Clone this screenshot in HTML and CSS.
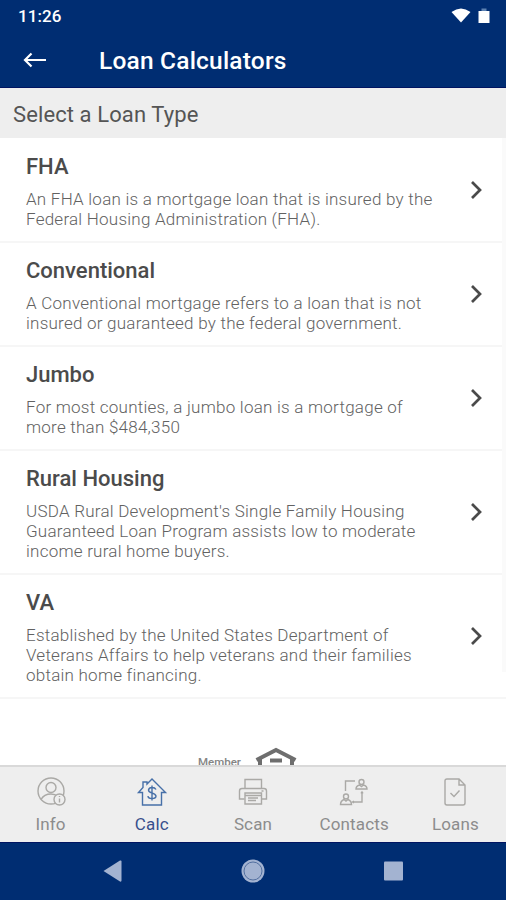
FILE: index.html
```html
<!DOCTYPE html>
<html lang="en">
<head>
<meta charset="utf-8">
<title>Loan Calculators</title>
<link rel="stylesheet" href="styles.css">
</head>
<body>
<div class="app">
  <header class="header">
    <div class="status">
      <span class="clock">11:26</span>
      <svg class="status-icons" width="40" height="20" viewBox="0 0 40 20"><path d="M1.500 5Q11 -2 20.500 5L11 15.500Z"/><path d="M28.500 4h11v12h-11z"/><path class="cap" d="M31.500 1.500h5V4h-5z"/></svg>
    </div>
    <div class="titlebar">
      <svg class="back" width="24" height="18" viewBox="0 0 24 18"><path d="M23 9H2M8.500 2.500L2 9l6.500 6.500"/></svg>
      <h1>Loan Calculators</h1>
    </div>
  </header>
  <h2 class="section"><span>Select a Loan Type</span></h2>
  <main class="content">
    <ul class="list">
      <li class="row"><div class="copy"><h3>FHA</h3><p>An FHA loan is a mortgage loan that is insured by the<br>Federal Housing Administration (FHA).</p></div><svg class="chevron" viewBox="0 0 12 20"><path d="M2 2l8 8-8 8"/></svg></li>
      <li class="row"><div class="copy"><h3>Conventional</h3><p>A Conventional mortgage refers to a loan that is not<br>insured or guaranteed by the federal government.</p></div><svg class="chevron" viewBox="0 0 12 20"><path d="M2 2l8 8-8 8"/></svg></li>
      <li class="row"><div class="copy"><h3>Jumbo</h3><p>For most counties, a jumbo loan is a mortgage of<br>more than $484,350</p></div><svg class="chevron" viewBox="0 0 12 20"><path d="M2 2l8 8-8 8"/></svg></li>
      <li class="row tall"><div class="copy"><h3>Rural Housing</h3><p>USDA Rural Development's Single Family Housing<br>Guaranteed Loan Program assists low to moderate<br>income rural home buyers.</p></div><svg class="chevron" viewBox="0 0 12 20"><path d="M2 2l8 8-8 8"/></svg></li>
      <li class="row tall"><div class="copy"><h3>VA</h3><p>Established by the United States Department of<br>Veterans Affairs to help veterans and their families<br>obtain home financing.</p></div><svg class="chevron" viewBox="0 0 12 20"><path d="M2 2l8 8-8 8"/></svg></li>
    </ul>
    <div class="legal">
      <span class="member">Member</span>
      <svg width="42" height="34" viewBox="0 0 42 34"><path d="M1.500 15L21 5l19.500 10M5 21v-7M37 21v-7"/><path d="M15 15.500h12"/></svg>
    </div>
    <div class="scrollbar"></div>
  </main>
  <nav class="tabs">
    <a class="tab"><svg viewBox="0 0 32 32"><circle cx="16" cy="15" r="13"/><circle cx="16" cy="11.500" r="5"/><path d="M6 23.500Q9 18 16 18q4 0 7 2.500"/><circle class="cover" cx="24.500" cy="23.500" r="5.500"/><path d="M24.500 22.500v4M24.500 20v1"/></svg><span>Info</span></a>
    <a class="tab active"><svg viewBox="0 0 32 32"><path d="M6.500 16.500H2.500L7 11.500V6h4v2L16 3l13.500 13.500h-4V29h-19z"/><path d="M20 13.500q-1-2-4-2t-3.500 2.500q0 2 3.500 3t4 3q0 2.500-4 2.500t-4-2.500M16 9.500v15"/></svg><span>Calc</span></a>
    <a class="tab"><svg viewBox="0 0 32 32"><path d="M8 12.500V3.500h16.500v9M7.500 23H2.500v-8q0-2.500 2.500-2.500h22q2.500 0 2.500 2.500v8h-5"/><path d="M8 17h16.500v11H8zM8 19.500h16M11 22h10M11 24.500h8M24.500 15h2"/></svg><span>Scan</span></a>
    <a class="tab"><svg viewBox="0 0 32 32"><path d="M7.500 15V5H17M24 16.500V26H15M16 25l-1.500 1 1.500 1M23 17.500l1-1.500 1 1.500"/><circle cx="23.500" cy="6" r="2.500"/><path d="M18 13q0-3 3.500-4l2 1.500 2-1.500q3.500 1 3.500 4z"/><circle cx="8" cy="20.500" r="2.500"/><path d="M2.500 28.500q0-3.500 3.500-5l2 1.500 2-1.500q3.500 1.500 3.500 5z"/></svg><span>Contacts</span></a>
    <a class="tab"><svg viewBox="0 0 32 32"><path d="M8 3h12l6 6V27q0 2-2 2H8Q6 29 6 27V5q0-2 2-2zM20 3v6h6M11.500 17l3.500 3.500 5.500-6"/></svg><span>Loans</span></a>
  </nav>
  <footer class="system">
    <svg width="506" height="58" viewBox="0 0 506 58"><path d="M103.500 28L120 17.500q1.500-.5 1.500 1v19q0 1.500-1.500 1z"/><circle cx="253" cy="28" r="11.500"/><circle class="ring" cx="253" cy="28" r="9"/><rect x="384" y="18.500" width="19" height="19" rx="1"/></svg>
  </footer>
</div>
</body>
</html>
```
FILE: styles.css
```css
* { box-sizing: border-box; }
body { margin: 0; font-family: Roboto, sans-serif; background: #fff; }
h1, h2, h3, p, ul { margin: 0; padding: 0; }
.app { width: 506px; height: 900px; display: flex; flex-direction: column; overflow: hidden; }
.header { height: 88px; background: #002d72; color: #fff; border-bottom: 1px solid #001461; }
.status { height: 32px; padding: 0 16px 0 18px; display: flex; align-items: center; justify-content: space-between; }
.clock { font-size: 17px; font-weight: 500; letter-spacing: .1px; }
.status-icons { fill: #fff; margin-top: 1px; }
.status-icons .cap { fill: #5d82b2; }
.titlebar { height: 56px; display: flex; align-items: center; padding-left: 23px; }
.back { fill: none; stroke: #fff; stroke-width: 2.2; }
h1 { margin-left: 52px; padding-top: 1px; font-size: 24.500px; font-weight: 500; line-height: 28px; letter-spacing: .2px; white-space: nowrap; }
.section { height: 50px; padding: 1px 0 0 13px; background: #eee; color: #555; font-size: 22px; font-weight: 400; line-height: 51px; letter-spacing: .1px; }
.content { flex: 1; min-height: 0; position: relative; overflow: hidden; padding-top: 1px; }
.list { list-style: none; }
.row { height: 104px; padding: 0 24px 0 26px; display: flex; justify-content: space-between; align-items: center; border-bottom: 2px solid #f6f6f6; }
.row.tall { height: 124px; }
.copy { white-space: nowrap; align-self: flex-start; padding-top: 14px; }
h3 { font-size: 22px; font-weight: 500; line-height: 28px; color: #4b4b4b; }
p { margin-top: 8px; font-size: 17px; font-weight: 300; line-height: 20.200px; letter-spacing: .24px; color: #626262; }
.chevron { width: 12px; height: 20px; fill: none; stroke: #4a4a4a; stroke-width: 2.700; }
.legal { display: flex; padding: 46px 0 0 198px; gap: 15px; align-items: flex-start; }
.legal svg { fill: none; stroke: #6e6e6e; stroke-width: 4; }
.member { width: 42px; font-size: 11.500px; font-weight: 500; line-height: 14px; margin-top: 10px; color: #858585; }
.scrollbar { position: absolute; right: 0; top: 0; width: 4px; height: 534px; background: #fafafa; }
.tabs { height: 77px; background: #eee; border-top: 2px solid #d9d9d9; display: grid; grid-template-columns: repeat(5, 1fr); }
.tab { display: flex; flex-direction: column; align-items: center; padding-top: 9px; color: #8c8c8c; font-size: 17px; line-height: 22px; letter-spacing: .15px; }
.tab svg { width: 32px; height: 32px; margin-bottom: 5px; fill: none; stroke: #aaa9a6; stroke-width: 1.400; }
.tab .cover { fill: #eee; }
.tab.active { color: #37508c; }
.tab.active svg { stroke: #4770a8; }
.system { height: 58px; background: #002d72; border-top: 1px solid #001461; }
.system svg { display: block; fill: #a3b3d1; }
.system .ring { fill: none; stroke: #526f9f; stroke-width: 1; }
```
